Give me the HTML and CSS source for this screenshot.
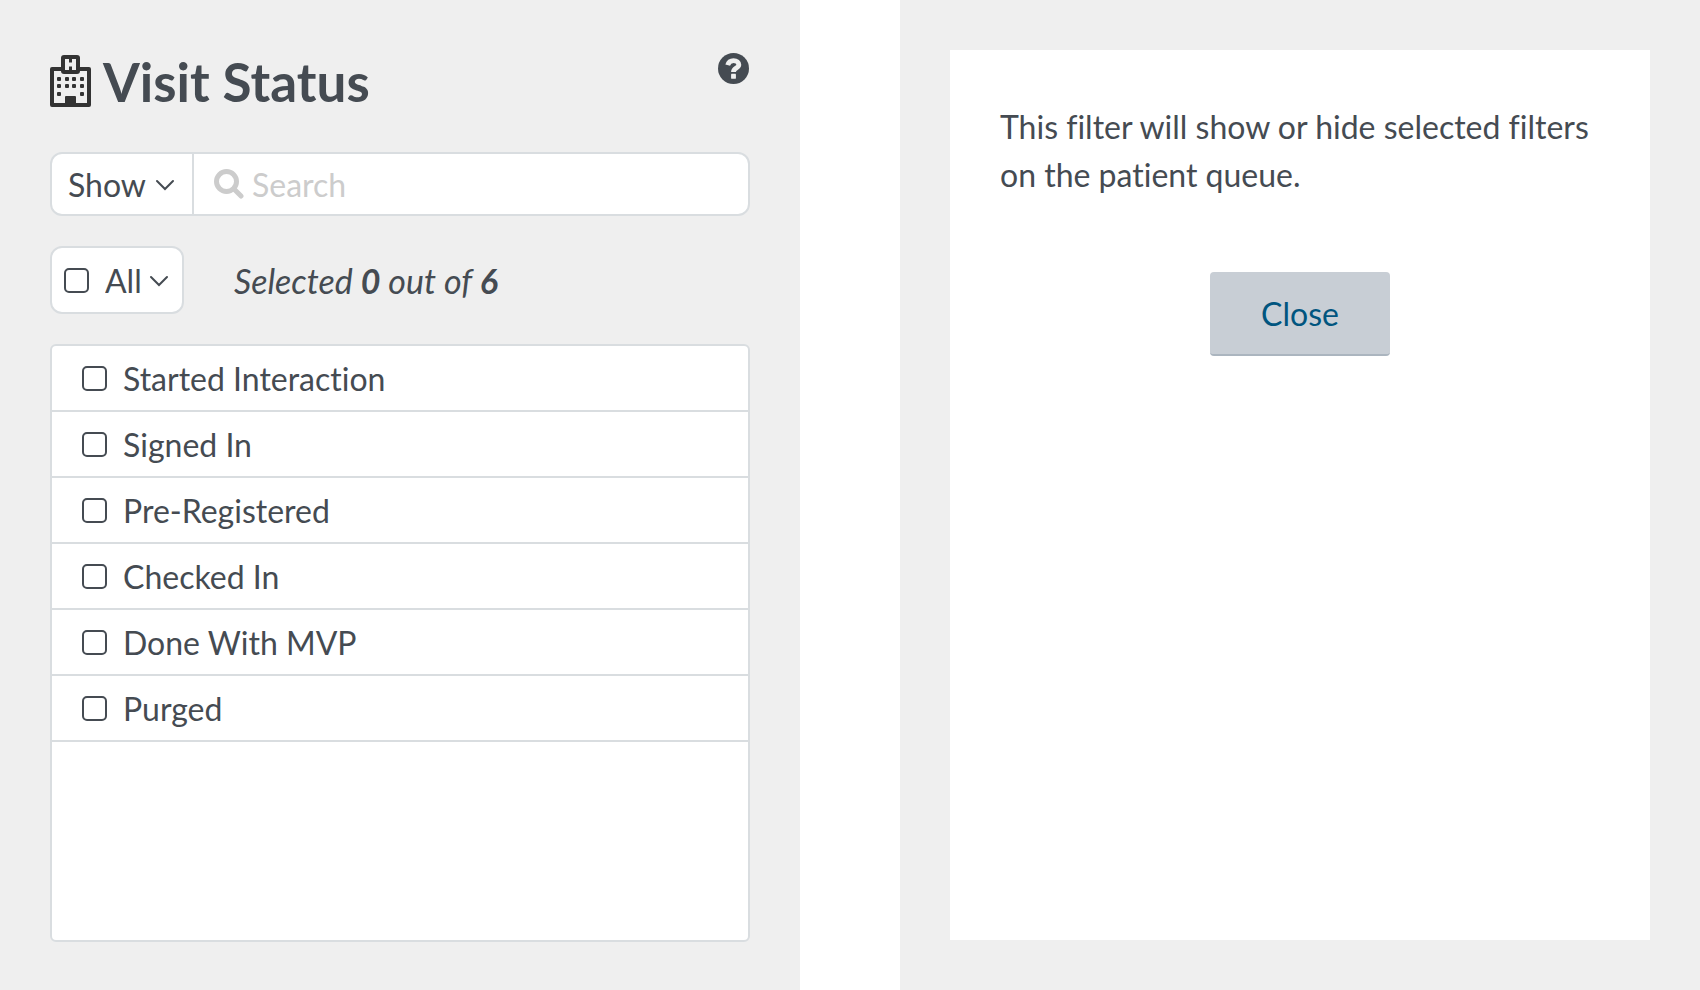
FILE: index.html
```html
<!DOCTYPE html>
<html lang="en">
  <head>
    <meta charset="utf-8" />
    <title>Visit Status</title>
    <link rel="stylesheet" href="styles.css">
  </head>
  <body>
    <main class="panel">
      <header class="panel-header">
        <svg class="hospital-icon" viewBox="0 0 41 54" aria-hidden="true">
          <path d="M13 14H2v36h37V14H28" fill="none" stroke="#333" stroke-width="4" stroke-linejoin="round" />
          <rect x="11" y="0" width="19" height="19" rx="3" fill="#333" />
          <path d="M17 4v11M24 4v11M17 9.500h7" fill="none" stroke="#efefef" stroke-width="4" />
          <g fill="#333">
            <rect x="7" y="22" width="4" height="4" rx="1" />
            <rect x="15" y="22" width="4" height="4" rx="1" />
            <rect x="22" y="22" width="4" height="4" rx="1" />
            <rect x="30" y="22" width="4" height="4" rx="1" />
            <rect x="7" y="29" width="4" height="4" rx="1" />
            <rect x="15" y="29" width="4" height="4" rx="1" />
            <rect x="22" y="29" width="4" height="4" rx="1" />
            <rect x="30" y="29" width="4" height="4" rx="1" />
            <rect x="7" y="37" width="4" height="4" rx="1" />
            <rect x="30" y="37" width="4" height="4" rx="1" />
            <path d="M15 50v-8q0-1 1-1h9q1 0 1 1v8z" />
          </g>
        </svg>
        <h1>Visit Status</h1>
        <button class="help" type="button" aria-label="Help">
          <svg viewBox="0 0 32 32" aria-hidden="true">
            <circle cx="16" cy="16" r="16" fill="#454b52" />
            <path d="M10 12.500C11 9 13.500 7.800 16 7.800C19.500 7.800 21.500 9.700 21.500 12C21.500 15.500 16 15.500 16 19.500" fill="none" stroke="#efefef" stroke-width="5" />
            <rect x="13.500" y="21.500" width="5" height="5" rx="0.500" fill="#efefef" />
          </svg>
        </button>
      </header>

      <form>
        <div class="search-group">
          <div class="dropdown mode">
            <select aria-label="Show or hide">
              <option>Show</option>
              <option>Hide</option>
            </select>
            <svg class="chevron" viewBox="0 0 20 12" aria-hidden="true"><path d="M2 2L10 10L18 2" /></svg>
          </div>
          <label class="search">
            <svg viewBox="0 0 30 30" aria-hidden="true">
              <circle cx="12.500" cy="12.500" r="10" fill="none" stroke="#ccc" stroke-width="5" />
              <path d="M20 20L27 27" stroke="#ccc" stroke-width="5" stroke-linecap="round" />
            </svg>
            <input type="text" placeholder="Search" aria-label="Search" />
          </label>
        </div>

        <div class="selection">
          <div class="select-all">
            <input type="checkbox" id="all" aria-label="Select all" />
            <div class="dropdown">
              <select aria-label="Selection">
                <option>All</option>
              </select>
              <svg class="chevron" viewBox="0 0 20 12" aria-hidden="true"><path d="M2 2L10 10L18 2" /></svg>
            </div>
          </div>
          <p class="count">Selected <b>0</b> out of <b>6</b></p>
        </div>

        <ul class="status-list">
          <li><label><input type="checkbox" name="status" />Started Interaction</label></li>
          <li><label><input type="checkbox" name="status" />Signed In</label></li>
          <li><label><input type="checkbox" name="status" />Pre-Registered</label></li>
          <li><label><input type="checkbox" name="status" />Checked In</label></li>
          <li><label><input type="checkbox" name="status" />Done With MVP</label></li>
          <li><label><input type="checkbox" name="status" />Purged</label></li>
        </ul>
      </form>
    </main>

    <aside class="panel">
      <div class="help-card">
        <p>This filter will show or hide selected filters on the patient queue.</p>
        <button class="close" type="button">Close</button>
      </div>
    </aside>
  </body>
</html>
```

FILE: styles.css
```css
* {
  box-sizing: border-box;
}

body {
  display: flex;
  gap: 100px;
  min-height: 100vh;
  margin: 0;
  background-color: white;
  color: #454b52;
  font-family: Lato, sans-serif;
  font-size: 32px;
  font-variant-ligatures: none;
}

h1,
p,
ul {
  margin: 0;
  padding: 0;
}

input,
select,
button {
  margin: 0;
  padding: 0;
  border: none;
  background: none;
  color: inherit;
  font: inherit;
}

.panel {
  display: flex;
  flex: 1;
  flex-direction: column;
  min-width: 0;
  padding: 50px 50px 48px;
  background-color: #efefef;
}

.panel-header {
  display: flex;
  gap: 12px;
  align-items: center;
  height: 64px;
  margin-bottom: 38px;
}

.hospital-icon {
  width: 41px;
  height: 54px;
}

h1 {
  flex: 1;
  font-size: 53px;
  line-height: 64px;
}

.help {
  align-self: flex-start;
  width: 32px;
  height: 32px;
  margin-top: 2px;
  cursor: pointer;
}

.help svg {
  display: block;
  width: 31px;
  height: 31px;
}

form {
  display: flex;
  flex: 1;
  flex-direction: column;
  gap: 30px;
}

.search-group {
  display: flex;
  height: 64px;
  border: 2px solid #d9dde0;
  border-radius: 12px;
  background-color: white;
}

.dropdown {
  position: relative;
}

.dropdown select {
  width: 100%;
  height: 100%;
  appearance: none;
  cursor: pointer;
}

.chevron {
  position: absolute;
  top: 50%;
  right: 17px;
  width: 20px;
  height: 12px;
  margin-top: -5px;
  pointer-events: none;
}

.chevron path {
  fill: none;
  stroke: #454b52;
  stroke-width: 2;
  stroke-linecap: round;
}

.mode {
  width: 142px;
  border-right: 2px solid #d9dde0;
}

.mode select {
  padding-left: 16px;
}

.search {
  display: flex;
  flex: 1;
  gap: 8px;
  align-items: center;
  padding: 0 20px;
}

.search svg {
  width: 30px;
  height: 30px;
}

.search input {
  flex: 1;
  min-width: 0;
  outline: none;
}

.search input::placeholder {
  color: #ccc;
}

.selection {
  display: flex;
  gap: 50px;
  align-items: center;
}

.select-all {
  display: flex;
  align-items: center;
  width: 134px;
  height: 68px;
  padding-left: 12px;
  border: 2px solid #d9dde0;
  border-radius: 12px;
  background-color: white;
}

.select-all .dropdown {
  flex: 1;
  height: 100%;
}

.select-all select {
  padding-left: 16px;
}

.select-all .chevron {
  right: 13px;
}

input[type="checkbox"] {
  flex: none;
  width: 25px;
  height: 25px;
  border: 2px solid #454b52;
  border-radius: 5px;
  background-color: white;
  appearance: none;
  cursor: pointer;
}

input[type="checkbox"]:checked {
  background-color: #454b52;
}

.count {
  font-size: 34px;
  font-style: italic;
}

.status-list {
  flex: 1;
  border: 2px solid #d9dde0;
  border-radius: 6px;
  background-color: white;
  list-style: none;
}

.status-list li {
  border-bottom: 2px solid #d9dde0;
}

.status-list label {
  display: flex;
  gap: 16px;
  align-items: center;
  height: 64px;
  padding-left: 30px;
}

.help-card {
  display: flex;
  flex: 1;
  flex-direction: column;
  align-items: center;
  margin-bottom: 2px;
  padding: 53px 50px;
  background-color: white;
}

.help-card p {
  width: 100%;
  line-height: 48px;
}

.close {
  width: 180px;
  height: 84px;
  margin-top: 73px;
  border-bottom: 2px solid #abb5bf;
  border-radius: 4px;
  background-color: #c8ced5;
  color: #00557f;
  cursor: pointer;
}
```
